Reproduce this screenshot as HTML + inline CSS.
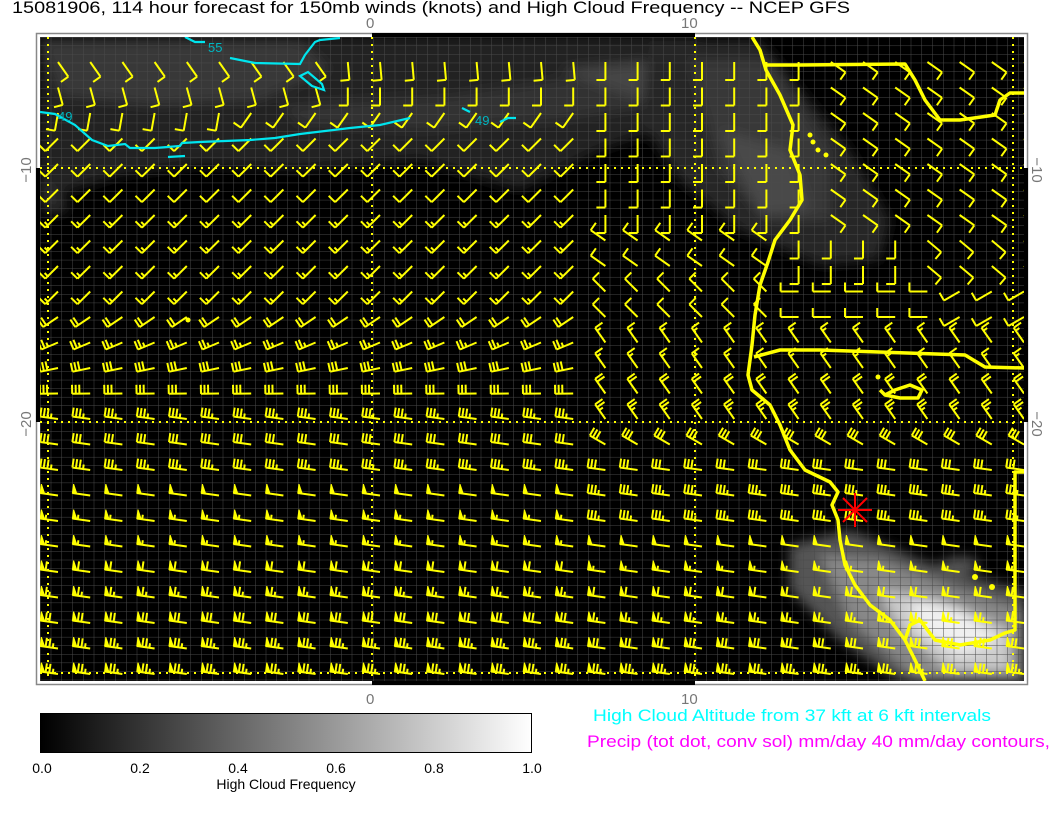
<!DOCTYPE html>
<html><head><meta charset="utf-8"><style>
html,body{margin:0;padding:0;background:#fff;width:1056px;height:816px;overflow:hidden;font-family:"Liberation Sans",sans-serif}
svg{position:absolute;left:0;top:0}
</style></head><body>
<svg id="s" width="1056" height="816" viewBox="0 0 1056 816" xmlns="http://www.w3.org/2000/svg">
<defs>
<pattern id="g" x="40" y="37" width="10.75" height="8.57" patternUnits="userSpaceOnUse">
<path d="M0 0V8.57M0 0H10.75" stroke="#4a4a4a" stroke-width="1" fill="none"/>
</pattern>
<filter id="b" x="-20%" y="-20%" width="140%" height="140%"><feGaussianBlur stdDeviation="6"/></filter>
<linearGradient id="cb" x1="0" x2="1" y1="0" y2="0"><stop offset="0" stop-color="#000"/><stop offset="1" stop-color="#fff"/></linearGradient>
<clipPath id="pc"><rect x="40" y="37" width="984" height="644"/></clipPath>
</defs>
<text x="12" y="13" font-size="17" fill="#000" textLength="838" lengthAdjust="spacingAndGlyphs">15081906, 114 hour forecast for 150mb winds (knots) and High Cloud Frequency -- NCEP GFS</text>
<text x="366" y="28" font-size="15" fill="#777">0</text>
<text x="681" y="28" font-size="15" fill="#777">10</text>
<text x="366" y="704" font-size="15" fill="#777">0</text>
<text x="681" y="704" font-size="15" fill="#777">10</text>
<text transform="translate(31,170) rotate(-90)" font-size="15" fill="#777" text-anchor="middle">−10</text>
<text transform="translate(31,424) rotate(-90)" font-size="15" fill="#777" text-anchor="middle">−20</text>
<text transform="translate(1032,170) rotate(90)" font-size="15" fill="#777" text-anchor="middle">−10</text>
<text transform="translate(1032,424) rotate(90)" font-size="15" fill="#777" text-anchor="middle">−20</text>
<rect x="36.5" y="33.5" width="991" height="651" fill="none" stroke="#888" stroke-width="1.5"/>
<rect x="372" y="33" width="323" height="4" fill="#000"/>
<rect x="372" y="681" width="323" height="4" fill="#000"/>
<rect x="36" y="168" width="4" height="254" fill="#000"/>
<rect x="1024" y="168" width="4" height="254" fill="#000"/>
<g clip-path="url(#pc)">
<rect x="40" y="37" width="984" height="644" fill="#000"/>
<g filter="url(#b)">
<path d="M40 37H700L720 80L690 120L600 150L520 190L420 160L300 170L200 165L120 175L40 200Z" fill="#222"/>
<path d="M40 40H300L330 70L260 100L150 105L60 95Z" fill="#383838"/>
<path d="M280 105L450 95L560 80L660 70L690 100L560 120L420 130L300 125Z" fill="#303030"/>
<path d="M560 70L660 60L700 95L640 100Z" fill="#444"/>
<path d="M650 40H760L850 150L890 220L880 260L820 265L740 230L680 180L640 120Z" fill="#262626"/>
<path d="M690 60H770L830 150L830 220L770 220L720 170Z" fill="#383838"/>
<path d="M720 130L790 150L810 210L760 215Z" fill="#484848"/>
<path d="M40 180L60 190L70 210L50 215L40 205Z" fill="#2a2a2a"/>
<path d="M790 545L850 530L920 560L1000 585L1024 590V681H900L840 640L790 590Z" fill="#555"/>
<path d="M820 555L880 560L960 590L1024 610V681H920L850 620Z" fill="#888"/>
<path d="M880 590L940 600L1010 630L1010 670L950 670L900 630Z" fill="#ccc"/>
<path d="M910 600L960 610L1000 640L960 655L920 630Z" fill="#f0f0f0"/>
<ellipse cx="960" cy="565" rx="20" ry="8" fill="#555"/>
</g>
<rect x="40" y="37" width="984" height="644" fill="url(#g)"/>
<g stroke="#ffff00" stroke-width="2" stroke-dasharray="2 5" fill="none">
<path d="M48 37V681M372 37V681M695 37V681M1013 37V681M40 168H1024M40 422H1024M40 673H1024"/>
</g>
<g id="barbs" stroke="#ffff00" stroke-width="2" fill="#ffff00"></g>
<g stroke="#00e5ee" stroke-width="2.2" fill="none">
<path d="M40 112L55 114L75 125L92 140L108 146L125 144L130 148L155 148L180 146L182 143L200 142L250 140L275 138L300 134L350 128L380 125L410 118"/>
<path d="M185 37L195 42L205 42"/>
<path d="M230 58L255 63L300 64L305 55L315 42L320 40L340 38"/>
<path d="M300 76L308 72L322 84L324 90L312 86Z"/>
<path d="M462 108L470 112"/>
<path d="M500 122L508 118L516 118"/>
<path d="M168 157L185 156"/>
</g>
<text x="208" y="52" font-size="13" fill="#00b5c0">55</text>
<text x="58" y="121" font-size="13" fill="#00b5c0">49</text>
<text x="475" y="125" font-size="13" fill="#00b5c0">49</text>
<g stroke="#ffff00" stroke-width="3.5" fill="none" stroke-linejoin="round">
<path d="M752 37L760 50L766 70L780 95L793 125L790 150L800 175L802 200L790 220L775 240L768 262L760 285L755 315L752 345L748 375L752 390L770 405L780 425L790 450L805 470L830 482L838 492L832 505L838 520L840 540L845 565L855 585L870 605L890 620L905 640L915 660L925 681"/>
<path d="M765 65L800 65L905 64L915 80L925 100L940 120L960 120L995 115L1000 100L1010 93L1024 93"/>
<path d="M754 357L780 350L820 350L965 355L985 367L1024 368"/>
<path d="M905 640L910 625L920 620L935 640L960 645L990 640L1005 633L1015 630V472H1024"/>
<path d="M880 390L885 395L895 390L910 385L922 390L918 398L900 398L885 395"/>
</g>
<g fill="#ffff00"><circle cx="810" cy="135" r="2.5"/><circle cx="813" cy="142" r="2.5"/><circle cx="818" cy="150" r="2.5"/><circle cx="826" cy="155" r="2.5"/><circle cx="878" cy="377" r="2.5"/><circle cx="188" cy="320" r="2.5"/><circle cx="975" cy="577" r="3"/><circle cx="992" cy="587" r="3"/></g>
<g stroke="#ff0000" stroke-width="2"><path d="M838 510H872M855 493V527M843 498L867 522M843 522L867 498"/></g>
</g>
<rect x="40.5" y="713.5" width="491" height="39" fill="url(#cb)" stroke="#000"/>
<g font-size="14" fill="#000" text-anchor="middle">
<text x="42" y="773">0.0</text><text x="140" y="773">0.2</text><text x="238" y="773">0.4</text><text x="336" y="773">0.6</text><text x="434" y="773">0.8</text><text x="532" y="773">1.0</text>
<text x="286" y="789">High Cloud Frequency</text>
</g>
<text x="593" y="721" font-size="16.5" fill="#00ffff" textLength="398" lengthAdjust="spacingAndGlyphs">High Cloud Altitude from 37 kft at 6 kft intervals</text>
<text x="587" y="747" font-size="16.5" fill="#ff00ff" textLength="463" lengthAdjust="spacingAndGlyphs">Precip (tot dot, conv sol) mm/day 40 mm/day contours,</text>
</svg>
<script>
(function(){
var g=document.getElementById('barbs');var out='';
function ang(c,r){
 if(r>=16) return 188;
 if(c<=16){
  if(r==0) return c<9?55:85;
  if(r==1) return c<9?75:90;
  if(r==2) return c<6?100:125;
  if(r<10) return 135;
  return Math.min(188,135+(r-9)*11);
 } else {
  if(r<=6) return c<=23?90:35;
  if(r<=8) return c<=22?215:(c<=26?90:40);
  if(r<=10) return c<=22?225:(c<=27?180:150);
  if(r==15) return 210;
  return 235;
 }
}
function spd(c,r){
 if(c<=16){
  if(r<6) return 10; if(r<10) return 15;
  var t=[20,25,30,30,35,30,35,50,55,55,60,65,70,75,75];
  return t[r-10];
 } else {
  if(r<=10) return 10;
  var t2=[15,15,20,25,30,30,35,35,50,55,60,65,70,75];
  return t2[r-11];
 }
}
var L=18,B=9,sp=3.6;
for(var r=0;r<25;r++){for(var c=0;c<31;c++){
 var sx=58+32.2*c, sy=62+25.5*r;
 var a=ang(c,r)*Math.PI/180, vx=Math.cos(a), vy=Math.sin(a);
 var bx=-vy, by=vx;
 var tx=sx+vx*L, ty=sy+vy*L;
 var s=spd(c,r);
 var p='M'+sx.toFixed(1)+' '+sy.toFixed(1)+'L'+tx.toFixed(1)+' '+ty.toFixed(1);
 var d=0,poly='';
 var f=Math.floor(s/50);s-=f*50;
 for(var i=0;i<f;i++){
  var px=tx-vx*d,py=ty-vy*d,qx=tx-vx*(d+4.5),qy=ty-vy*(d+4.5);
  poly+='<polygon stroke-width="1" points="'+px.toFixed(1)+','+py.toFixed(1)+' '+(px+bx*B).toFixed(1)+','+(py+by*B).toFixed(1)+' '+qx.toFixed(1)+','+qy.toFixed(1)+'"/>';
  d+=5.5;
 }
 var fb=Math.floor(s/10);s-=fb*10;
 for(var i=0;i<fb;i++){var px=tx-vx*d,py=ty-vy*d;p+='M'+px.toFixed(1)+' '+py.toFixed(1)+'l'+(bx*B).toFixed(1)+' '+(by*B).toFixed(1);d+=sp;}
 if(s>=5){if(d==0)d=sp;var px=tx-vx*d,py=ty-vy*d;p+='M'+px.toFixed(1)+' '+py.toFixed(1)+'l'+(bx*B/2).toFixed(1)+' '+(by*B/2).toFixed(1);}
 out+='<path fill="none" d="'+p+'"/>'+poly;
}}
g.innerHTML=out;
})();
</script>
</body></html>
